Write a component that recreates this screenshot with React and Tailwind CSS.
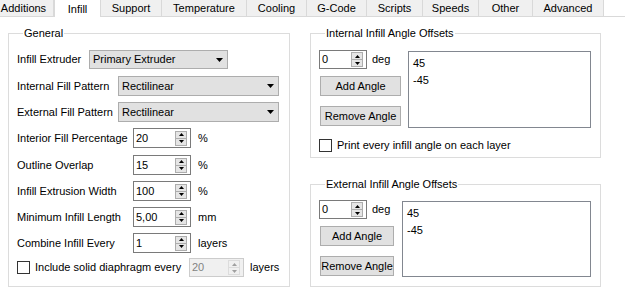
import React from "react";

const tabs = [
  { name: "Additions", w: "w-[60px]", ml: "-ml-[6px]" },
  { name: "Infill", w: "w-[47px]", active: true },
  { name: "Support", w: "w-[61px]" },
  { name: "Temperature", w: "w-[85px]" },
  { name: "Cooling", w: "w-[60px]" },
  { name: "G-Code", w: "w-[60px]" },
  { name: "Scripts", w: "w-[56px]" },
  { name: "Speeds", w: "w-[56px]" },
  { name: "Other", w: "w-[54px]" },
  { name: "Advanced", w: "w-[71px]" },
];

const Up = () => (
  <svg width="5" height="3" viewBox="0 0 5 3">
    <path d="M0 3 L2.5 0 L5 3 Z" fill="currentColor" />
  </svg>
);

const Down = () => (
  <svg width="5" height="3" viewBox="0 0 5 3">
    <path d="M0 0 L2.5 3 L5 0 Z" fill="currentColor" />
  </svg>
);

function Spin({ value, className, disabled }) {
  return (
    <div
      className={`flex items-center shrink-0 border ${
        disabled
          ? "border-[#cccccc] bg-[#f0f0f0] text-[#838383]"
          : "border-[#7a7a7a] bg-white text-black"
      } ${className}`}
    >
      <span className="flex-1 pl-[2px] leading-none">{value}</span>
      <div
        className={`flex flex-col w-[12px] h-[15px] mr-[3px] border ${
          disabled ? "border-[#dcdcdc] text-[#a0a0a0]" : "border-[#adadad] text-black"
        }`}
      >
        <div className={`flex-1 flex items-center justify-center border-b ${disabled ? "border-[#dcdcdc] bg-[#f0f0f0]" : "border-[#adadad] bg-[#e5e5e5]"}`}>
          <Up />
        </div>
        <div className={`flex-1 flex items-center justify-center ${disabled ? "bg-[#f0f0f0]" : "bg-[#e5e5e5]"}`}>
          <Down />
        </div>
      </div>
    </div>
  );
}

function Combo({ value, className }) {
  return (
    <div
      className={`flex items-center shrink-0 border border-[#adadad] bg-[#e1e1e1] ${className}`}
    >
      <span className="flex-1 pl-[3px]">{value}</span>
      <svg width="7" height="4" viewBox="0 0 7 4" className="mr-[4px]">
        <path d="M0 0 L7 0 L3.5 4 Z" fill="#000" />
      </svg>
    </div>
  );
}

const Check = () => (
  <div className="w-[13px] h-[13px] shrink-0 border border-[#333333] bg-white" />
);

function Button({ children, className }) {
  return (
    <div
      className={`flex items-center justify-center h-[20px] border border-[#adadad] bg-[#e1e1e1] ${className}`}
    >
      {children}
    </div>
  );
}

function SpinRow({ label, value, unit, mt }) {
  return (
    <div className={`flex items-center h-[20px] ${mt}`}>
      <span className="w-[116px] shrink-0">{label}</span>
      <Spin value={value} className="w-[58px] h-[20px]" />
      <span className="ml-[7px]">{unit}</span>
    </div>
  );
}

function AngleBox({ title, className, listW, colW, btnW, spinMt, btn1Mt, listMt, listH, children }) {
  return (
    <fieldset className={`border border-[#dcdcdc] px-[8px] ${className}`}>
      <legend className="ml-[6px] px-[1px] leading-[14px]">{title}</legend>
      <div className={`flex ${spinMt}`}>
        <div className={`flex flex-col shrink-0 ${colW}`}>
          <div className="flex items-center">
            <Spin value="0" className="w-[48px] h-[19px]" />
            <span className="ml-[5px]">deg</span>
          </div>
          <Button className={`ml-[1px] ${btnW} ${btn1Mt}`}>Add Angle</Button>
          <Button className={`ml-[1px] mt-[10px] ${btnW}`}>Remove Angle</Button>
        </div>
        <div
          className={`flex flex-col border border-[#828790] bg-white pl-[4px] pt-[3px] leading-[17px] ${listW} ${listH} ${listMt}`}
        >
          <span>45</span>
          <span>-45</span>
        </div>
      </div>
      {children}
    </fieldset>
  );
}

export default function App() {
  return (
    <div
      className="w-[625px] h-[297px] overflow-hidden bg-white text-black text-[11px]"
      style={{ fontFamily: '"Liberation Sans", Arial, sans-serif' }}
    >
      <div className="flex items-end h-[17px] border-b border-[#d9d9d9]">
        {tabs.map((t) =>
          t.active ? (
            <div
              key={t.name}
              className={`flex justify-center shrink-0 h-[17px] -mb-[1px] pt-[1px] bg-white border-x border-[#d9d9d9] ${t.w}`}
            >
              {t.name}
            </div>
          ) : (
            <div
              key={t.name}
              className={`flex items-center justify-center shrink-0 h-[16px] bg-[#f0f0f0] border-r border-[#d9d9d9] ${t.w} ${t.ml || ""}`}
            >
              {t.name}
            </div>
          )
        )}
      </div>

      <div className="flex pt-[9px]">
        <fieldset className="ml-[8px] w-[282px] h-[261px] border border-[#dcdcdc] pl-[8px]">
          <legend className="ml-[6px] px-[1px] leading-[14px]">General</legend>
          <div className="flex items-center mt-[10px] h-[19px]">
            <span className="w-[72px] shrink-0">Infill Extruder</span>
            <Combo value="Primary Extruder" className="w-[139px] h-[19px]" />
          </div>
          <div className="flex items-center mt-[7px] h-[20px]">
            <span className="w-[101px] shrink-0">Internal Fill Pattern</span>
            <Combo value="Rectilinear" className="w-[161px] h-[20px]" />
          </div>
          <div className="flex items-center mt-[6px] h-[20px]">
            <span className="w-[101px] shrink-0">External Fill Pattern</span>
            <Combo value="Rectilinear" className="w-[161px] h-[20px]" />
          </div>
          <SpinRow label="Interior Fill Percentage" value="20" unit="%" mt="mt-[6px]" />
          <SpinRow label="Outline Overlap" value="15" unit="%" mt="mt-[7px]" />
          <SpinRow label="Infill Extrusion Width" value="100" unit="%" mt="mt-[6px]" />
          <SpinRow label="Minimum Infill Length" value="5,00" unit="mm" mt="mt-[6px]" />
          <SpinRow label="Combine Infill Every" value="1" unit="layers" mt="mt-[6px]" />
          <div className="flex items-center mt-[5px] h-[19px]">
            <Check />
            <span className="ml-[5px] w-[154px] shrink-0">Include solid diaphragm every</span>
            <Spin value="20" disabled className="w-[55px] h-[19px]" />
            <span className="ml-[6px]">layers</span>
          </div>
        </fieldset>

        <div className="flex flex-col ml-[20px] w-[291px]">
          <AngleBox
            title="Internal Infill Angle Offsets"
            className="h-[132px]"
            colW="w-[89px]"
            listW="w-[183px]"
            listH="h-[77px]"
            btnW="w-[81px]"
            spinMt="mt-[10px]"
            btn1Mt="mt-[7px]"
            listMt="mt-[1px]"
          >
            <div className="flex items-center mt-[9px]">
              <Check />
              <span className="ml-[5px]">Print every infill angle on each layer</span>
            </div>
          </AngleBox>
          <AngleBox
            title="External Infill Angle Offsets"
            className="h-[110px] mt-[19px]"
            colW="w-[83px]"
            listW="w-[189px]"
            listH="h-[76px]"
            btnW="w-[74px]"
            spinMt="mt-[9px]"
            btn1Mt="mt-[7px]"
            listMt="mt-[1px]"
          />
        </div>
      </div>
    </div>
  );
}
